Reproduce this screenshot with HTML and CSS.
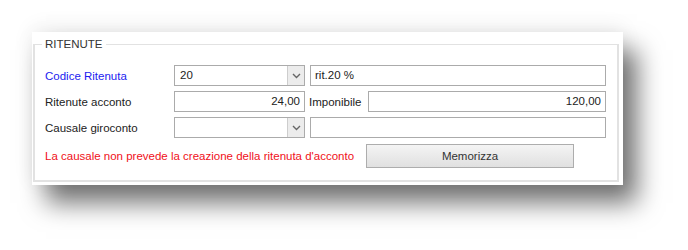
FILE: index.html
```html
<!DOCTYPE html>
<html lang="it">
<head>
	<meta charset="UTF-8">
	<title>Ritenute</title>
	<link rel="stylesheet" href="styles.css">
</head>
<body>
	<div class="panel">
		<fieldset class="group">
			<legend>RITENUTE</legend>
			<div class="form">
				<label class="lbl blue">Codice Ritenuta</label>
				<div class="combo"><span class="val">20</span><span class="arrow"><svg width="9" height="6" viewBox="0 0 9 6"><path d="M1 1 L4.5 4.5 L8 1" fill="none" stroke="#666" stroke-width="1.4"/></svg></span></div>
				<div class="field">rit.20 %</div>

				<label class="lbl">Ritenute acconto</label>
				<div class="field num">24,00</div>
				<div class="pair">
					<label class="lbl">Imponibile</label>
					<div class="field num grow">120,00</div>
				</div>

				<label class="lbl">Causale giroconto</label>
				<div class="combo"><span class="val"></span><span class="arrow"><svg width="9" height="6" viewBox="0 0 9 6"><path d="M1 1 L4.5 4.5 L8 1" fill="none" stroke="#666" stroke-width="1.4"/></svg></span></div>
				<div class="field"></div>
			</div>
			<div class="bottom">
				<span class="warn">La causale non prevede la creazione della ritenuta d'acconto</span>
				<button class="btn">Memorizza</button>
			</div>
		</fieldset>
	</div>
</body>
</html>
```

FILE: styles.css
```css
*{padding: 0;margin: 0;box-sizing: border-box;}
html, body{
	height: 100%;
}
body{
	background: #fff;
	font-family: "Liberation Sans", Arial, sans-serif;
	font-size: 11.5px;
	color: #222;
	padding: 32px 0 0 32px;
}
.panel{
	width: 591px;
	height: 153px;
	background: #fff;
	padding: 0 4px 3px 1px;
	box-shadow: 0 -4px 20px rgba(0,0,0,0.07), 14px 18px 24px rgba(0,0,0,0.55);
}
.group{
	height: 100%;
	border: 2px solid #e2e2e2;
	border-top-width: 1px;
	padding: 0 11px 0 10px;
}
.group legend{
	padding: 0 3px;
	margin-left: -3px;
	color: #333;
	line-height: 24px;
}
.form{
	display: grid;
	grid-template-columns: 129px 131px 1fr;
	grid-auto-rows: 21px;
	row-gap: 5px;
	margin-top: 9px;
}
.lbl{
	display: flex;
	align-items: center;
	white-space: nowrap;
}
.blue{
	color: #1c1cf0;
}
.combo{
	display: flex;
	border: 1px solid #ababab;
	background: #fff;
}
.combo .val{
	flex: 1;
	padding: 3px 5px;
}
.combo .arrow{
	width: 17px;
	display: flex;
	align-items: center;
	justify-content: center;
	background: #ececec;
	border-left: 1px solid #cdcdcd;
}
.field{
	border: 1px solid #ababab;
	background: #fff;
	padding: 3px 4px;
	margin-left: 5px;
}
.form > .num{
	margin-left: 0;
}
.num{
	text-align: right;
}
.pair{
	display: flex;
	margin-left: 4px;
}
.pair .lbl{
	width: 59px;
}
.pair .field{
	flex: 1;
	margin-left: 0;
}
.bottom{
	display: flex;
	align-items: center;
	margin-top: 6px;
}
.warn{
	color: #f01020;
	width: 321px;
	white-space: nowrap;
}
.btn{
	width: 208px;
	height: 24px;
	border: 1px solid #adadad;
	background: linear-gradient(#f4f4f4, #e0e0e0);
	font: inherit;
	color: #333;
}
```
